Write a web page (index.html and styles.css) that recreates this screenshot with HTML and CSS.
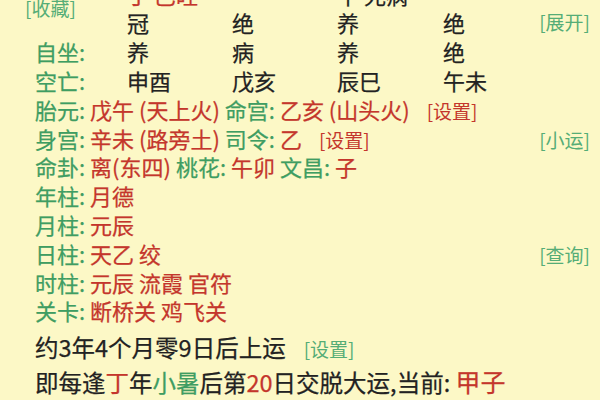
FILE: index.html
```html
<!DOCTYPE html>
<html lang="zh">
<head>
<meta charset="utf-8">
<link rel="stylesheet" href="styles.css">
</head>
<body>
<div class="page">
  <span class="link fav">[收藏]</span>
  <div class="cols top">
    <span></span><span class="red">丁 巳旺</span><span></span><span>午 死病</span><span></span><span></span>
  </div>
  <div class="cols">
    <span></span><span>冠</span><span>绝</span><span>养</span><span>绝</span><span class="link">[展开]</span>
  </div>
  <div class="cols">
    <span class="lab">自坐:</span><span>养</span><span>病</span><span>养</span><span>绝</span><span></span>
  </div>
  <div class="cols">
    <span class="lab">空亡:</span><span>申酉</span><span>戊亥</span><span>辰巳</span><span>午未</span><span></span>
  </div>
  <div class="row">
    <span class="line"><span class="lab">胎元:</span> <span class="red">戊午 (天上火)</span> <span class="lab">命宫:</span> <span class="red">乙亥 (山头火)</span><span class="red set">[设置]</span></span>
  </div>
  <div class="row">
    <span class="line"><span class="lab">身宫:</span> <span class="red">辛未 (路旁土)</span> <span class="lab">司令:</span> <span class="red">乙</span><span class="red set">[设置]</span></span><span class="link">[小运]</span>
  </div>
  <div class="row">
    <span class="line"><span class="lab">命卦:</span> <span class="red">离(东四)</span> <span class="lab">桃花:</span> <span class="red">午卯</span> <span class="lab">文昌:</span> <span class="red">子</span></span>
  </div>
  <div class="row"><span class="line"><span class="lab">年柱:</span> <span class="red">月德</span></span></div>
  <div class="row"><span class="line"><span class="lab">月柱:</span> <span class="red">元辰</span></span></div>
  <div class="row"><span class="line"><span class="lab">日柱:</span> <span class="red">天乙 绞</span></span><span class="link">[查询]</span></div>
  <div class="row"><span class="line"><span class="lab">时柱:</span> <span class="red">元辰 流霞 官符</span></span></div>
  <div class="row"><span class="line"><span class="lab">关卡:</span> <span class="red">断桥关 鸡飞关</span></span></div>
  <div class="big first">约3年4个月零9日后上运<span class="link set2">[设置]</span></div>
  <div class="big">即每逢<span class="red">丁</span>年<span class="grn">小暑</span>后第<span class="red">20</span>日交脱大运,当前: <span class="red cur">甲子</span></div>
</div>
</body>
</html>
```

FILE: styles.css
```css
html, body {
  margin: 0;
  padding: 0;
  background: #fcf8c6;
  overflow: hidden;
}
.page {
  position: relative;
  width: 600px;
  height: 400px;
  box-sizing: border-box;
  padding: 0 10px 0 35px;
  display: flex;
  flex-direction: column;
  font-family: "Noto Sans CJK SC", "Noto Sans", sans-serif;
  font-size: 22px;
  line-height: 28.8px;
  color: #222;
  -webkit-text-stroke: 0.25px currentColor;
}
.cols {
  display: grid;
  grid-template-columns: 92px 105px 105px 106px 1fr auto;
  height: 28.8px;
  white-space: nowrap;
}
.top { margin-top: -20.4px; }
.row {
  display: flex;
  justify-content: space-between;
  align-items: baseline;
  height: 28.8px;
}
.line { white-space: pre; }
.lab { color: #3f9d62; }
.red { color: #c4362c; }
.grn { color: #3f9d62; }
.link {
  color: #55ad76;
  font-size: 19px;
  -webkit-text-stroke: 0;
}
.set { margin-left: 17px; font-size: 19px; -webkit-text-stroke: 0; }
.fav {
  position: absolute;
  left: 25px;
  top: -6px;
  line-height: 28px;
}
.big {
  font-size: 23.5px;
  line-height: 33px;
  white-space: pre;
}
.first { margin-top: 6px; }
.set2 { margin-left: 18px; }
.cur { font-size: 25px; }
```
